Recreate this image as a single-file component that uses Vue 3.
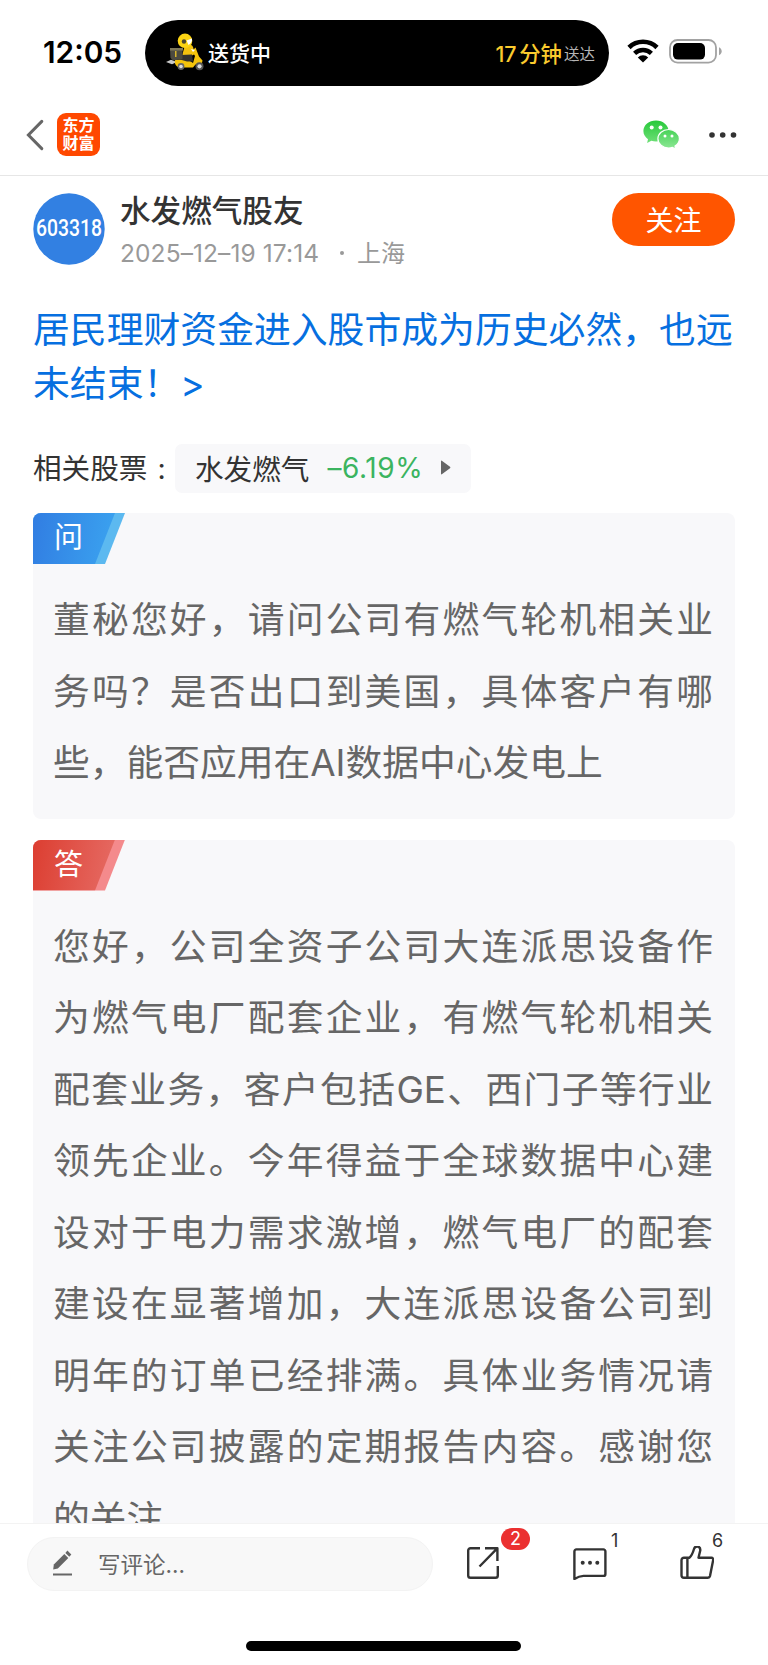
<template>
  <div class="screen">
    <header class="status">
      <span class="clock">12:05</span>
      <div class="island">
        <svg class="rider" viewBox="0 0 40 38" aria-hidden="true">
          <path d="M1 29l5-2.200 6 2.200-5 2.200z" fill="#c9c9c9" />
          <path d="M20 12c3-1.500 7-1 8 2l2 7-4 2h-9z" fill="#f3c20f" />
          <path d="M10 27l12-1 6 4 2-7-3-5 3.500-3.500 3.500 9 3.500 4-1 5-6-1-2.500 3H15c-3.500 0-6-4-5-7.500z" fill="#f5c40c" />
          <path d="M16 22l11-.5 1 7h-6l-7-2z" fill="#34332f" />
          <path d="M5 16h12.500v10L8 27.500 5.500 25z" fill="#4c4a40" />
          <path d="M5 15h13v2.500H5z" fill="#7f795a" />
          <path d="M10 18h1.500v6H10z" fill="#d8b52a" />
          <circle cx="20" cy="7.800" r="7.300" fill="#fbd313" />
          <path d="M21.500 7.500l5.500-2c.5 3-1 5-3.500 6.500z" fill="#fff" />
          <circle cx="19" cy="8.500" r="2.200" fill="#4a4632" />
          <path d="M26 16l4 1-2 2z" fill="#fff" />
          <circle cx="16" cy="33.500" r="3.400" fill="#666" />
          <circle cx="16" cy="33.500" r="1.800" fill="#ddd" />
          <circle cx="34.500" cy="33.300" r="4" fill="#555" />
          <circle cx="34.500" cy="33.300" r="2.100" fill="#ddd" />
        </svg>
        <span class="island-state">送货中</span>
        <span class="island-eta">17 分钟</span>
        <span class="island-unit">送达</span>
      </div>
      <svg class="wifi" viewBox="0 0 32 24" aria-hidden="true">
        <path d="M2 8.500a20 20 0 0 1 28 0" fill="none" stroke="#000" stroke-width="4.600" />
        <path d="M7.600 14.400a12 12 0 0 1 16.800 0" fill="none" stroke="#000" stroke-width="4.400" />
        <path d="M16 23.600l-5.200-5.200a7.400 7.400 0 0 1 10.400 0z" />
      </svg>
      <svg class="battery" viewBox="0 0 53 25" aria-hidden="true">
        <rect x="1" y="1" width="46" height="22.600" rx="7.500" fill="none" stroke="#a2a2a2" stroke-width="1.800" />
        <rect x="4" y="4" width="32" height="16.600" rx="5" />
        <path d="M50 8.300c3.600 1.400 3.600 6.600 0 8z" fill="#a2a2a2" />
      </svg>
    </header>

    <nav class="nav">
      <svg class="back" viewBox="0 0 18 32" aria-hidden="true">
        <path d="M15.800 2.400L2.400 16l13.400 13.600" fill="none" stroke="#666" stroke-width="3" stroke-linecap="round" />
      </svg>
      <div class="logo"><span>东方</span><span>财富</span></div>
      <svg class="wechat" viewBox="0 0 37 30" aria-hidden="true">
        <defs>
          <linearGradient id="wx-a" x1="0" y1="0" x2="0" y2="1">
            <stop offset="0" stop-color="#27c93a" />
            <stop offset="1" stop-color="#6fdf78" />
          </linearGradient>
          <linearGradient id="wx-b" x1="0" y1="0" x2="0" y2="1">
            <stop offset="0" stop-color="#47d257" />
            <stop offset="1" stop-color="#8ee896" />
          </linearGradient>
        </defs>
        <path d="M13 .4C6 .4.4 5 .4 11c0 3.400 1.800 6.200 4.600 8.200l-.9 3.700 4.300-2.200c1.500.5 3 .7 4.600.7 7 0 12.600-4.600 12.600-10.400S20 .4 13 .4z" fill="url(#wx-a)" />
        <path d="M25.600 9.500c-6 0-10.700 4.200-10.700 9.300s4.700 9.200 10.700 9.200c1.300 0 2.600-.2 3.800-.6l3.300 1.700-.7-3c2.700-1.700 4.400-4.300 4.400-7.300 0-5.100-4.800-9.300-10.800-9.300z" fill="url(#wx-b)" stroke="#fff" stroke-width="1.200" />
        <g fill="#fff">
          <circle cx="8.700" cy="7.500" r="2" />
          <circle cx="17.500" cy="7.500" r="2" />
          <circle cx="22" cy="16" r="1.500" />
          <circle cx="29" cy="16" r="1.500" />
        </g>
      </svg>
      <svg class="more" viewBox="0 0 28 6" aria-hidden="true">
        <circle cx="3" cy="3" r="2.800" />
        <circle cx="13.700" cy="3" r="2.800" />
        <circle cx="24.500" cy="3" r="2.800" />
      </svg>
    </nav>

    <main class="content">
      <section class="author">
        <svg class="avatar" viewBox="0 0 72 72" aria-hidden="true">
          <circle cx="36" cy="36" r="35.700" fill="#3280e2" />
          <text x="3" y="42.500" textLength="66" lengthAdjust="spacingAndGlyphs">603318</text>
        </svg>
        <div class="who">
          <div class="name">水发燃气股友</div>
          <div class="meta">
            <span class="date">2025–12–19 17:14</span>
            <i class="sep"></i>
            <span class="place">上海</span>
          </div>
        </div>
        <button class="follow">关注</button>
      </section>

      <h1 class="title">居民理财资金进入股市成为历史必然，也远未结束！&gt;</h1>

      <div class="stock">
        <span class="stock-label">相关股票<b>:</b></span>
        <div class="chip">
          <span>水发燃气</span>
          <span class="change">–6.19%</span>
          <svg class="tri" viewBox="0 0 11 15" aria-hidden="true">
            <path d="M1 1.500Q1 0 2.200.9L10 6.700q.9.800 0 1.600L2.200 14.100Q1 15 1 13.500z" />
          </svg>
        </div>
      </div>

      <article v-for="item in cards" :key="item.tag" class="card" :class="item.kind">
        <div class="tag"><span>{{ item.tag }}</span></div>
        <p class="text">{{ item.text }}</p>
      </article>
    </main>

    <footer class="bar">
      <div class="tools">
        <div class="input">
          <svg class="pen" viewBox="0 0 22 28" aria-hidden="true">
            <path d="M1.200 20.500l.6-5L12.300 5l4 4L5.800 19.400z" />
            <path d="M13.400 3.900l2-2.300 3.900 4-2 2.200z" />
            <path d="M1 24.500h19v2H1z" />
          </svg>
          <span>写评论...</span>
        </div>
        <div class="tool">
          <svg viewBox="0 0 34 34" aria-hidden="true">
            <path d="M14 2.200H4.500a2.300 2.300 0 0 0-2.300 2.300v25a2.300 2.300 0 0 0 2.300 2.300h25a2.300 2.300 0 0 0 2.300-2.300V20M19 2.200h12.400V15M31 2.600L13.500 20.500" />
          </svg>
          <span class="badge">2</span>
        </div>
        <div class="tool">
          <svg viewBox="0 0 34 34" aria-hidden="true">
            <path d="M1.400 33V5.400a2 2 0 0 1 2-2h27a2 2 0 0 1 2 2v22.500a2 2 0 0 1-2 2H10.500Q6 30 1.400 33z" />
            <g class="dots">
              <circle cx="9.700" cy="16.800" r="2" />
              <circle cx="17" cy="16.800" r="2" />
              <circle cx="24.300" cy="16.800" r="2" />
            </g>
          </svg>
          <span class="count">1</span>
        </div>
        <div class="tool">
          <svg viewBox="0 0 34 34" aria-hidden="true">
            <path d="M1.500 14.200a2.500 2.500 0 0 1 2.500-2.500h5.500c2.200-2 3.400-5 4.500-8.700 1.300-4 6.500-3 6.300 1.200L18.500 11.700h13a1.800 1.800 0 0 1 1.700 2.200l-3.200 16.200a2.200 2.200 0 0 1-2.200 1.700H4a2.500 2.500 0 0 1-2.500-2.500zM7.400 11.700v20" />
          </svg>
          <span class="count near">6</span>
        </div>
      </div>
      <div class="home"></div>
    </footer>
  </div>
</template>

<script setup>
const cards = [
  {
    kind: 'ask',
    tag: '问',
    text: '董秘您好，请问公司有燃气轮机相关业务吗？是否出口到美国，具体客户有哪些，能否应用在AI数据中心发电上'
  },
  {
    kind: 'reply',
    tag: '答',
    text: '您好，公司全资子公司大连派思设备作为燃气电厂配套企业，有燃气轮机相关配套业务，客户包括GE、西门子等行业领先企业。今年得益于全球数据中心建设对于电力需求激增，燃气电厂的配套建设在显著增加，大连派思设备公司到明年的订单已经排满。具体业务情况请关注公司披露的定期报告内容。感谢您的关注'
  }
]
</script>

<style>
body {
  background: #fff;
}
</style>

<style scoped>
.screen {
  display: flex;
  flex-direction: column;
  width: 768px;
  height: 1665px;
  overflow: hidden;
  background: #fff;
  color: #333;
  font-family: Inter, 'Noto Sans CJK SC', sans-serif;
}

.screen * {
  box-sizing: border-box;
}

svg {
  display: block;
  flex: none;
}

.status {
  display: flex;
  flex: none;
  height: 96px;
  padding: 20px 0 0 43px;
}

.clock {
  width: 102px;
  color: #000;
  font-size: 29.8px;
  font-weight: 600;
  line-height: 65px;
}

.island {
  display: flex;
  align-items: center;
  width: 464px;
  height: 66px;
  padding: 0 14px 0 20px;
  border-radius: 33px;
  background: #000;
  color: #fff;
  white-space: nowrap;
}

.rider {
  width: 40px;
  height: 38px;
  margin: -3px 3px 0 0;
}

.island-state {
  margin-top: -2px;
  font-size: 21px;
  font-weight: 500;
}

.island-eta {
  margin: -2px 0 0 auto;
  color: #fbcb2e;
  font-size: 21.4px;
  font-weight: 500;
  word-spacing: -3px;
}

.island-unit {
  margin-left: 2px;
  color: #b5b5b5;
  font-size: 15.5px;
}

.wifi {
  width: 32px;
  height: 24px;
  margin: 19px 0 0 18px;
}

.battery {
  width: 53px;
  height: 25px;
  margin: 19px 0 0 10px;
}

.nav {
  display: flex;
  flex: none;
  align-items: center;
  height: 80px;
  padding: 0 31px 2px 26px;
  border-bottom: 1px solid #e6e6e6;
}

.back {
  width: 18px;
  height: 32px;
}

.logo {
  display: flex;
  flex-direction: column;
  justify-content: center;
  align-items: center;
  width: 43px;
  height: 43px;
  margin-left: 13px;
  border-radius: 9px;
  background: #ff4800;
  color: #fff;
  font-size: 16px;
  font-weight: 700;
  line-height: 17.5px;
}

.wechat {
  width: 37px;
  height: 30px;
  margin-left: auto;
}

.more {
  width: 28px;
  height: 6px;
  margin-left: 29px;
  fill: #333;
}

.content {
  flex: 1;
  min-height: 0;
  overflow: hidden;
  padding: 17px 33px 0;
}

.author {
  display: flex;
  align-items: flex-start;
  height: 72px;
}

.avatar {
  width: 72px;
  height: 72px;
}

.avatar text {
  fill: #fff;
  font-family: Roboto, sans-serif;
  font-size: 23px;
  font-weight: 500;
}

.who {
  margin-left: 15px;
}

.name {
  font-size: 30.6px;
  font-weight: 500;
  line-height: 35px;
}

.meta {
  display: flex;
  align-items: center;
  height: 34px;
  margin-top: 8px;
  color: #999;
  font-size: 24px;
}

.date {
  width: 200px;
  font-size: 24.5px;
  letter-spacing: 0.1px;
  white-space: nowrap;
}

.sep {
  width: 4px;
  height: 4px;
  margin: 0 13px 0 20px;
  border-radius: 50%;
  background: #999;
}

.place {
  margin-top: -3px;
}

.follow {
  width: 123px;
  height: 53px;
  margin-left: auto;
  padding: 0 0 0;
  border: 0;
  border-radius: 27px;
  background: #f50;
  color: #fff;
  font: inherit;
  font-size: 28px;
  line-height: 56px;
}

.title {
  margin: 38px -3px 0 0;
  color: #066fe0;
  font-size: 36.85px;
  font-weight: 400;
  line-height: 53.5px;
}

.stock {
  display: flex;
  align-items: center;
  height: 49px;
  margin-top: 34px;
  font-size: 28.6px;
}

.stock-label {
  width: 142px;
  margin-top: -4px;
  white-space: nowrap;
}

.stock-label b {
  margin-left: 10px;
  font-weight: 400;
}

.chip {
  display: flex;
  align-items: center;
  width: 296px;
  height: 49px;
  padding: 0 0 3px 20px;
  border-radius: 7px;
  background: #f8f8fa;
  white-space: nowrap;
}

.change {
  width: 96px;
  margin: 1px 0 0 18px;
  color: #3bb45f;
  font-size: 28px;
  letter-spacing: 0.6px;
}

.tri {
  width: 11px;
  height: 15px;
  margin: 1px 0 0 17px;
  fill: #666;
}

.card {
  margin-top: 21px;
  padding-bottom: 20px;
  overflow: hidden;
  border-radius: 8px;
  background: #f8f8fa;
}

.stock + .card {
  margin-top: 20px;
}

.tag {
  width: 92px;
  height: 51px;
  padding-left: 21px;
  background: #5cb9f0;
  clip-path: polygon(0 0, 100% 0, 72px 100%, 0 100%);
  color: #fff;
  font-size: 29px;
  line-height: 49px;
}

.tag::before {
  content: '';
  display: block;
  width: 82px;
  height: 51px;
  margin: 0 0 -51px -21px;
  background: linear-gradient(100deg, #317de2, #3ba4f0);
  clip-path: polygon(0 0, 100% 0, 62px 100%, 0 100%);
}

.tag span {
  position: relative;
}

.reply .tag {
  background: #f48a8c;
}

.reply .tag::before {
  background: linear-gradient(100deg, #dc3e31, #e66c65);
}

.text {
  margin: 20px 0 0;
  padding: 0 22px 0 20px;
  color: #666;
  font-size: 36.75px;
  line-height: 71.5px;
  text-align: justify;
}

.bar {
  flex: none;
  height: 142px;
  padding: 13px 0 0 27px;
  border-top: 1px solid #f3f3f3;
  background: #fff;
}

.tools {
  display: flex;
  height: 54px;
}

.input {
  display: flex;
  flex: none;
  align-items: center;
  width: 406px;
  margin-right: 33px;
  padding: 0 0 3px 24px;
  border: 1px solid #f3f3f3;
  border-radius: 27px;
  background: #f8f8f8;
  color: #666;
  font-size: 22.5px;
}

.pen {
  width: 22px;
  height: 28px;
  margin-right: 24px;
  fill: #666;
}

.tool {
  position: relative;
  flex: none;
  width: 107px;
  padding-top: 9px;
}

.tool svg {
  width: 34px;
  height: 34px;
  fill: none;
  stroke: #333;
  stroke-width: 2.4;
  stroke-linejoin: round;
}

.tool .dots {
  fill: #333;
  stroke: none;
}

.badge,
.count {
  position: absolute;
  top: -9px;
  left: 35px;
  font-size: 18px;
  line-height: 22px;
}

.badge {
  width: 29px;
  border-radius: 11px;
  background: #eb3030;
  color: #fff;
  text-align: center;
}

.count {
  top: -7px;
  left: 38px;
}

.count.near {
  left: 32px;
}

.home {
  width: 275px;
  height: 10px;
  margin: 50px 0 0 219px;
  border-radius: 5px;
  background: #000;
}
</style>
